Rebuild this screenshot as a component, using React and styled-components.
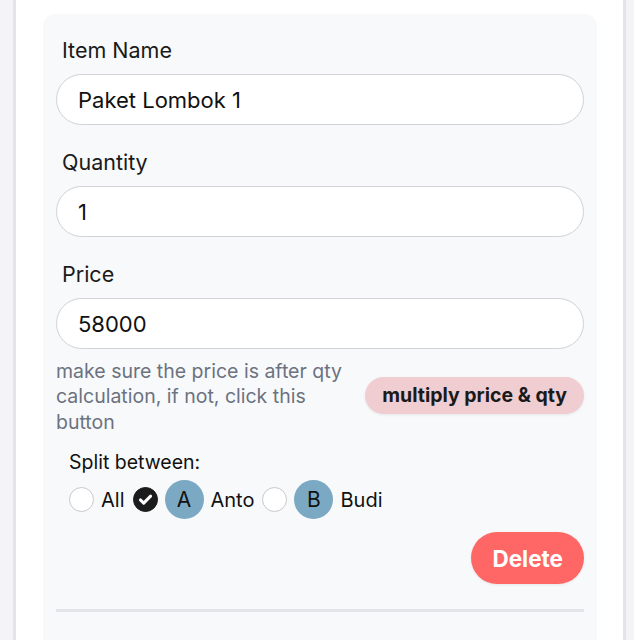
import React from "react";
import styled, { createGlobalStyle } from "styled-components";

const Global = createGlobalStyle`
  html, body { margin: 0; padding: 0; background: #f4f4f6; }
  body { font-family: Inter, "Noto Sans", sans-serif; color: #111; }
  * { box-sizing: border-box; }
`;

const Page = styled.div`
  padding: 0 8px 0 13px;
  height: 640px;
  overflow: hidden;
`;

const Card = styled.div`
  background: #fff;
  border-left: 3px solid #e4e4e8;
  border-right: 3px solid #e4e4e8;
  padding: 14px 26px 0 27px;
  min-height: 100%;
`;

const Panel = styled.div`
  background: #f8f9fb;
  border-radius: 12px;
  padding: 21px 13px 40px 13px;
  display: flex;
  flex-direction: column;
`;

const Field = styled.div`
  display: flex;
  flex-direction: column;
  gap: 9px;
  margin-bottom: 22px;
`;

const Label = styled.label`
  font-size: 21.5px;
  line-height: 30px;
  padding-left: 6px;
  color: #1a1a1a;
`;

const Input = styled.input`
  height: 51px;
  border: 1.5px solid #d2d2d6;
  border-radius: 26px;
  background: #fff;
  padding: 0 21px;
  font-family: inherit;
  font-size: 22px;
  color: #111;
  outline: none;
  width: 100%;
`;

const HelpRow = styled.div`
  display: flex;
  align-items: center;
  justify-content: space-between;
  margin-top: -12.5px;
`;

const Help = styled.p`
  margin: 0;
  width: 300px;
  font-size: 19.5px;
  line-height: 25.5px;
  color: #6b7280;
`;

const PinkButton = styled.button`
  border: none;
  background: #efcdd1;
  border-radius: 19px;
  height: 37px;
  padding: 0 17px;
  margin-bottom: 3px;
  font-family: inherit;
  font-weight: 700;
  font-size: 19.5px;
  color: #1a1a1a;
  box-shadow: 0 1px 3px rgba(0, 0, 0, 0.08);
`;

const Split = styled.div`
  padding: 15px 13px 0;
  display: flex;
  flex-direction: column;
  gap: 6px;
`;

const SplitTitle = styled.div`
  font-size: 19.5px;
  line-height: 24px;
`;

const People = styled.div`
  display: flex;
  align-items: center;
  gap: 7px;
  font-size: 20px;
`;

const Radio = styled.span`
  width: 25px;
  height: 25px;
  flex: none;
  border-radius: 50%;
  border: 1.5px solid ${(p) => (p.$checked ? "#1c1c1c" : "#c9c9cd")};
  background: ${(p) => (p.$checked ? "#1c1c1c" : "#fff")};
  display: flex;
  align-items: center;
  justify-content: center;
`;

const Avatar = styled.span`
  width: 39px;
  height: 39px;
  flex: none;
  border-radius: 50%;
  background: #7ba9c4;
  display: flex;
  align-items: center;
  justify-content: center;
  font-size: 21px;
  color: #111;
`;

const Name = styled.span`
  margin-right: 1px;
`;

const Actions = styled.div`
  display: flex;
  justify-content: flex-end;
  margin-top: 13px;
`;

const DeleteButton = styled.button`
  border: none;
  background: #ff6666;
  color: #fff;
  font-family: inherit;
  font-weight: 700;
  font-size: 22.5px;
  height: 52px;
  padding: 0 21px;
  border-radius: 26px;
  box-shadow: 0 1px 3px rgba(0, 0, 0, 0.08);
`;

const Divider = styled.hr`
  border: none;
  height: 3px;
  background: #e4e5e8;
  margin: 25px 0 0;
  width: 100%;
`;

const Check = () => (
  <svg width="17" height="17" viewBox="0 0 16 16">
    <path d="M3.2 8.4l3.1 3L12.8 4.8" fill="none" stroke="#fff" strokeWidth="2.8" strokeLinecap="round" strokeLinejoin="round" />
  </svg>
);

export default function App() {
  return (
    <>
      <Global />
      <Page>
        <Card>
          <Panel>
            <Field>
              <Label>Item Name</Label>
              <Input defaultValue="Paket Lombok 1" />
            </Field>
            <Field>
              <Label>Quantity</Label>
              <Input defaultValue="1" />
            </Field>
            <Field>
              <Label>Price</Label>
              <Input defaultValue="58000" />
            </Field>
            <HelpRow>
              <Help>make sure the price is after qty calculation, if not, click this button</Help>
              <PinkButton>multiply price &amp; qty</PinkButton>
            </HelpRow>
            <Split>
              <SplitTitle>Split between:</SplitTitle>
              <People>
                <Radio />
                <Name>All</Name>
                <Radio $checked>
                  <Check />
                </Radio>
                <Avatar>A</Avatar>
                <Name>Anto</Name>
                <Radio />
                <Avatar>B</Avatar>
                <Name>Budi</Name>
              </People>
            </Split>
            <Actions>
              <DeleteButton>Delete</DeleteButton>
            </Actions>
            <Divider />
          </Panel>
        </Card>
      </Page>
    </>
  );
}
